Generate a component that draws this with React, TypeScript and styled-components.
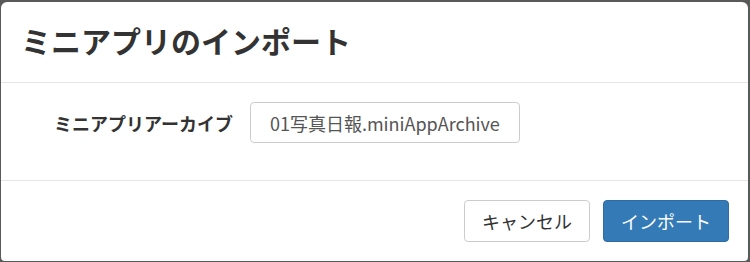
import styled, { createGlobalStyle } from 'styled-components';

const GlobalStyle = createGlobalStyle`
  html, body {
    margin: 0;
    padding: 0;
    background: #595959;
  }
  body {
    font-family: 'Noto Sans CJK JP', 'Noto Sans', sans-serif;
    color: #333;
  }
`;

export default function App() {
  return (
    <>
      <GlobalStyle />
      <Modal>
        <Header>
          <Title>ミニアプリのインポート</Title>
        </Header>
        <Body>
          <FieldRow>
            <Label>ミニアプリアーカイブ</Label>
            <FileBox>01写真日報.miniAppArchive</FileBox>
          </FieldRow>
        </Body>
        <Footer>
          <Button>キャンセル</Button>
          <Button $primary>インポート</Button>
        </Footer>
      </Modal>
    </>
  );
}

const Modal = styled.div`
  margin: 2px 2px 0 1px;
  height: 259px;
  background: #fff;
  border-radius: 6px 6px 4px 4px;
  display: flex;
  flex-direction: column;
  overflow: hidden;
`;

const Header = styled.div`
  height: 80px;
  padding: 0 20px;
  display: flex;
  align-items: center;
  border-bottom: 1px solid #e5e5e5;
`;

const Title = styled.h3`
  margin: 0;
  font-size: 30px;
  font-weight: 700;
  line-height: 1;
  color: #333;
  padding-bottom: 4px;
`;

const Body = styled.div`
  height: 78px;
  padding-top: 19px;
  display: flex;
  align-items: flex-start;
  border-bottom: 1px solid #e5e5e5;
`;

const FieldRow = styled.div`
  display: flex;
  align-items: center;
  gap: 17px;
  padding-left: 53px;
`;

const Label = styled.label`
  font-size: 18px;
  font-weight: 700;
  color: #333;
`;

const FileBox = styled.div`
  box-sizing: border-box;
  height: 41px;
  padding: 0 19px;
  display: flex;
  align-items: center;
  border: 1px solid #ccc;
  border-radius: 4px;
  font-size: 18px;
  color: #555;
`;

const Footer = styled.div`
  flex: 1;
  display: flex;
  align-items: center;
  justify-content: flex-end;
  gap: 13px;
  padding: 0 19px;
`;

const Button = styled.button<{ $primary?: boolean }>`
  box-sizing: border-box;
  height: 42px;
  padding: 0 17px;
  border-radius: 4px;
  font-family: inherit;
  font-size: 18px;
  border: 1px solid ${(p) => (p.$primary ? '#2e6da4' : '#ccc')};
  background: ${(p) => (p.$primary ? '#337ab7' : '#fff')};
  color: ${(p) => (p.$primary ? '#fff' : '#333')};
  cursor: pointer;
`;
